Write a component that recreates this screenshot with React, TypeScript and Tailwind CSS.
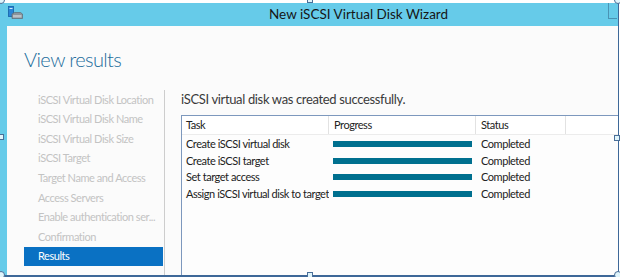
import React from 'react'

const steps = [
  'iSCSI Virtual Disk Location',
  'iSCSI Virtual Disk Name',
  'iSCSI Virtual Disk Size',
  'iSCSI Target',
  'Target Name and Access',
  'Access Servers',
  'Enable authentication ser...',
  'Confirmation',
]

const tasks = [
  'Create iSCSI virtual disk',
  'Create iSCSI target',
  'Set target access',
  'Assign iSCSI virtual disk to target',
]

function WizardIcon() {
  return (
    <svg width="15" height="14" viewBox="0 0 15 14">
      <rect x="0.5" y="0.5" width="5" height="10" fill="#2a86d6" stroke="#1560a8" strokeWidth="0.8" />
      <rect x="1.5" y="2" width="3" height="1" fill="#cfe6fb" />
      <path d="M4 8 L6.5 6.5 L12.5 6.5 L14.5 8 L14.5 12.5 L4 12.5 Z" fill="#8a949c" stroke="#5f6a72" strokeWidth="0.7" />
      <rect x="5" y="9" width="8.5" height="2.5" fill="#b9c1c7" />
    </svg>
  )
}

function Handle({ className }: { className: string }) {
  return <div className={`absolute w-[6px] h-[6px] bg-[#dff4fb] border border-[#4a6f99] ${className}`} />
}

export default function App() {
  return (
    <div
      className="relative w-[620px] h-[277px] overflow-hidden bg-white flex flex-col"
      style={{ fontFamily: 'Lato, "Noto Sans", sans-serif' }}
    >
      <div className="h-[3px] bg-white" />
      <div className="flex-1 w-[619px] bg-[#66cbe9] flex flex-col pl-[7px] border-r-[1.5px] border-b-[2px] border-[#3e6898]">
        <div className="h-[23px] relative flex items-center">
          <div className="absolute left-[1px] top-[3px]">
            <WizardIcon />
          </div>
          <div className="absolute left-[262px] text-[13.5px] text-[#161616]">
            New iSCSI Virtual Disk Wizard
          </div>
          <div className="absolute right-[1px] top-0 w-[9px] h-[16px] border-l border-b border-[#4a93b4]" />
        </div>
        <div className="flex-1 bg-[#fbfbfb] flex flex-col min-h-0">
          <div className="pl-[17px] pt-[20px] h-[64px] text-[20px] font-light leading-[26px] tracking-[-0.6px] text-[#1b6d9c]">
            View results
          </div>
          <div className="flex flex-1 min-h-0">
            <div className="w-[141px] ml-[17px] border-r border-[#cdcdcd] pr-[1px]">
              {steps.map((s) => (
                <div key={s} className="h-[19.6px] flex items-center pl-[14px] text-[11px] tracking-[-0.45px] text-[#c3c3c3] whitespace-nowrap">
                  {s}
                </div>
              ))}
              <div className="h-[19.6px] flex items-center pl-[14px] text-[11px] tracking-[-0.45px] text-white bg-[#0a71c3]">
                Results
              </div>
            </div>
            <div className="flex-1 pl-[16px] flex flex-col">
              <div className="h-[20px] flex items-center text-[13px] tracking-[-0.35px] text-[#3a3a3a]">
                iSCSI virtual disk was created successfully.
              </div>
              <div className="mt-[5px] flex-1 border-l-[1.5px] border-t-[1.5px] border-[#7d98bd] bg-[#fdfdfd]">
                <div className="flex h-[19px] border-b border-[#ececec] bg-white text-[11px] tracking-[-0.45px] text-[#222]">
                  <div className="w-[147px] pl-[4px] flex items-center border-r border-[#e2e2e2]">Task</div>
                  <div className="w-[147px] pl-[5px] flex items-center border-r border-[#e2e2e2]">Progress</div>
                  <div className="w-[90px] pl-[5px] flex items-center border-r border-[#e2e2e2]">Status</div>
                  <div className="flex-1" />
                </div>
                <div className="pt-[1px]">
                  {tasks.map((t) => (
                    <div key={t} className="flex h-[16.5px] items-center text-[11px] tracking-[-0.45px] text-[#222]">
                      <div className="w-[147px] pl-[4px] whitespace-nowrap overflow-hidden">{t}</div>
                      <div className="w-[147px] pl-[4px]">
                        <div className="w-[139px] h-[6px] bg-[#00708f]" />
                      </div>
                      <div className="pl-[5px]">Completed</div>
                    </div>
                  ))}
                </div>
              </div>
            </div>
          </div>
        </div>
      </div>
      <Handle className="left-[307px] top-[-3px]" />
      <Handle className="left-[-2px] top-[134px]" />
      <Handle className="left-[614px] top-[135px]" />
      <Handle className="left-[307px] top-[272px]" />
      <div className="absolute left-[-3px] top-[271px] w-[8px] h-[8px] rounded-full bg-[#dff4fb] border border-[#4a6f99]" />
      <div className="absolute left-[614px] top-[271px] w-[8px] h-[8px] rounded-full bg-[#dff4fb] border border-[#4a6f99]" />
      <div className="absolute left-[-3px] top-[-4px] w-[8px] h-[8px] rounded-full bg-[#dff4fb] border border-[#4a6f99]" />
      <div className="absolute left-[614px] top-[-4px] w-[8px] h-[8px] rounded-full bg-[#dff4fb] border border-[#4a6f99]" />
    </div>
  )
}
